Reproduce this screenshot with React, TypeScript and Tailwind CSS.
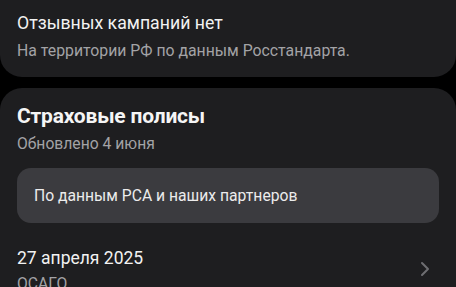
import React from 'react';

const font = { fontFamily: 'Roboto, "Noto Sans", sans-serif' };

export default function App() {
  return (
    <div className="h-[287px] w-[456px] overflow-hidden bg-black" style={font}>
      <div className="h-[77px] rounded-b-[22px] bg-[#1e1e20] px-[17px] pt-[11px]">
        <div className="text-[17.7px] leading-[24px] text-[#f2f2f2]">Отзывных кампаний нет</div>
        <div className="mt-[6px] text-[15.8px] leading-[20px] text-[#a3a3a6]">
          На территории РФ по данным Росстандарта.
        </div>
      </div>
      <div className="mt-[11px] rounded-t-[22px] bg-[#1e1e20] px-[17px] pt-[14px]">
        <div className="text-[21px] font-bold leading-[28px] tracking-[-0.2px] text-[#f5f5f5]">Страховые полисы</div>
        <div className="mt-[4px] text-[15.7px] leading-[20px] text-[#a3a3a6]">Обновлено 4 июня</div>
        <div className="mt-[14px] flex h-[55px] items-center rounded-[14px] bg-[#3b3b3f] px-[17px] text-[15.7px] text-[#ececec]">
          По данным РСА и наших партнеров
        </div>
        <div className="mt-[23px] flex items-center justify-between">
          <div>
            <div className="text-[17.5px] leading-[24px] text-[#f2f2f2]">27 апреля 2025</div>
            <div className="mt-[4px] text-[15.7px] leading-[20px] text-[#a3a3a6]">ОСАГО</div>
          </div>
          <svg width="10" height="16" viewBox="0 0 10 16" className="mr-[9px] -mt-[3px]">
            <path d="M2 2l6 6-6 6" fill="none" stroke="#6e6e72" strokeWidth="2" strokeLinecap="round" strokeLinejoin="round" />
          </svg>
        </div>
      </div>
    </div>
  );
}
